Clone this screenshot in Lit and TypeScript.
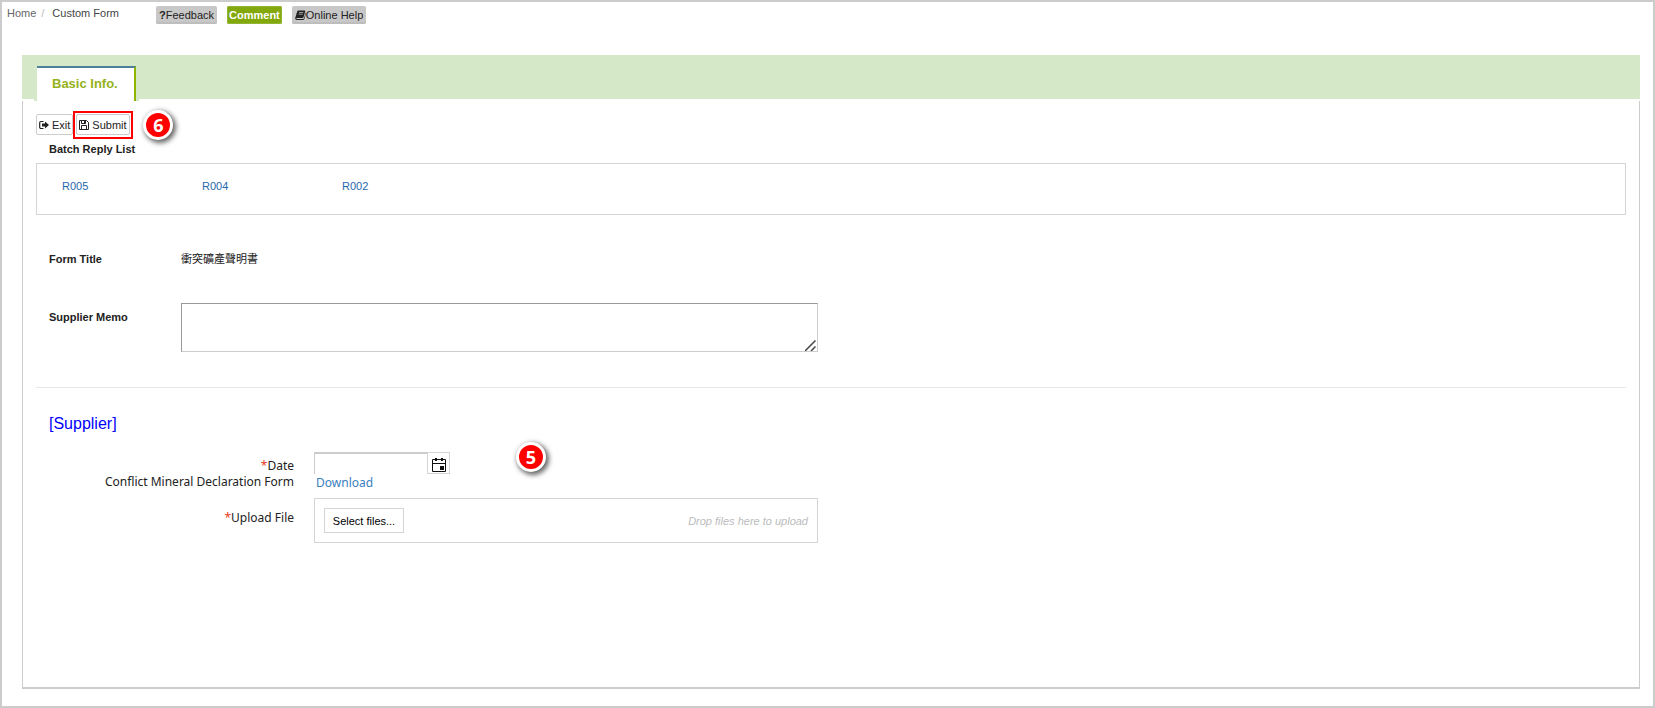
import { LitElement, html, css, svg } from "lit";
import { customElement, property, query } from "lit/decorators.js";

@customElement("step-marker")
class StepMarker extends LitElement {
  @property() step = "";

  static styles = css`
    :host {
      display: flex;
      align-items: center;
      justify-content: center;
      box-sizing: border-box;
      width: 30px;
      height: 30px;
      border: 3px solid #fff;
      border-radius: 50%;
      background: #f00;
      box-shadow: 2px 2px 5px 1px rgba(0, 0, 0, 0.6);
      color: #fff;
      font: bold 18px/24px "Open Sans", "Noto Sans", sans-serif;
    }
  `;

  render() {
    return html`${this.step}`;
  }
}

const exitIcon = svg`
  <path d="M4.5 1.500H2A1.200 1.200 0 0 0 .700 2.800V7.200A1.200 1.200 0 0 0 2 8.500H4.500" fill="none" stroke="currentColor" stroke-width="1.200"/>
  <path d="M3 3.600H6V1.500L10 5 6 8.500V6.400H3Z" fill="currentColor"/>`;

const saveIcon = svg`
  <path d="M.5.500H7.500L9.500 2.500V9.500H.500Z" fill="none" stroke="currentColor"/>
  <path d="M2.500.500V3.500H6.500V.500M2.500 9.500V5.500H7.500V9.500" fill="none" stroke="currentColor"/>
  <path d="M5 1H6V3H5Z" fill="currentColor"/>`;

const bookIcon = svg`
  <path d="M3.300.500H9.600Q10.500.700 10.200 1.600L8.500 7.200Q8.200 8 7.400 8H1.900Q1.200 8 1.300 8.500T2 9H8Q8.700 9 9 8.300L10.500 3.300 10.800 2.500Q11.200 3 10.900 3.700L9.400 9Q9 10 8 10H1.600Q.200 9.800.200 8.300.200 7.500.600 6.700L2.200 1.600Q2.500.600 3.300.500Z" fill="currentColor"/>
  <path d="M4 2.500H8.300M3.500 4.200H7.800" stroke="#ccc" stroke-width=".7"/>`;

const calendarIcon = svg`
  <path d="M.5 2.500H13.500V14.500H.500ZM.500 6.500H13.500" fill="none" stroke="currentColor"/>
  <path d="M3 1H5V4H3ZM9 1H11V4H9ZM8 9H12V13H8Z" fill="currentColor"/>`;

@customElement("app-root")
class AppRoot extends LitElement {
  @query(".file-input") fileInput!: HTMLInputElement;

  static styles = css`
    :host {
      display: flex;
      flex-direction: column;
      box-sizing: border-box;
      min-height: 100vh;
      padding: 3px 13px 17px 20px;
      border: 2px solid #ccc;
      background: #fff;
      color: #222;
      font: 11px/16px "Liberation Sans", "Noto Sans CJK TC", sans-serif;
    }
    a { color: #1f68ad; text-decoration: none; }
    button, input, textarea { box-sizing: border-box; margin: 0; font: inherit; color: inherit; }
    button { cursor: pointer; }

    .topbar { display: flex; align-items: flex-start; height: 50px; margin-left: -15px; }
    .crumbs { display: flex; width: 149px; color: #444; }
    .crumbs a { color: #666; }
    .slash { box-sizing: border-box; width: 16px; padding-left: 5px; color: #bbb; }
    .links { display: flex; gap: 10px; padding-top: 1px; }
    .tag {
      display: flex;
      align-items: center;
      height: 18px;
      padding: 0 3px;
      border: 0;
      border-radius: 2px;
      background: #c8c8c8;
      box-shadow: inset 0 -2px 1px #bdbdbd;
      color: #222;
    }
    .tag.green {
      padding: 0 2px;
      background: #82a80b;
      box-shadow: inset 0 0 1px 1px #94b53a;
      color: #fff;
      font-weight: bold;
    }

    .tabs { display: flex; box-sizing: border-box; height: 44px; padding: 11px 15px 0; background: #d5e8c8; }
    .tab {
      height: 35px;
      padding: 0 16px 2px 15px;
      border: 0;
      border-top: 2px solid #4c7f98;
      border-right: 2px solid #8fb400;
      background: #fff;
      box-shadow: -3px 0 #d5e8c8, 3px 0 #d5e8c8;
      color: #94b21c;
      font-size: 13px;
      font-weight: bold;
    }
    .panel {
      flex: 1;
      box-sizing: border-box;
      margin-top: 2px;
      padding: 13px 13px 40px;
      border: solid #ccc;
      border-width: 0 1px 2px;
    }

    .toolbar { display: flex; height: 21px; }
    .tool {
      display: flex;
      align-items: center;
      gap: 3px;
      height: 21px;
      padding: 0 2px;
      border: 1px solid #ccc;
      border-radius: 2px;
      background: #fff;
    }
    .highlight {
      position: relative;
      display: flex;
      height: 22px;
      margin: -3px 0;
      padding: 1px;
      border: 2px solid #f00;
      background: #fff;
    }
    .step-submit { position: absolute; left: 68px; top: -3px; }
    .step-date { position: absolute; left: 202px; top: -10px; }

    h2, h3 { margin: 0; font-size: 11px; line-height: 16px; }
    h2 { margin: 6px 13px; }
    .replies { display: flex; box-sizing: border-box; height: 52px; padding: 14px 25px; border: 1px solid #d5d5d5; }
    .replies a { width: 140px; }

    .row { display: flex; box-sizing: border-box; width: 782px; max-width: 100%; padding-left: 13px; }
    .row .name { width: 132px; font-weight: bold; }
    .title-row { margin-top: 36px; }
    .memo-row { margin-top: 36px; }
    .memo-row .name { padding-top: 6px; }
    .memo { position: relative; display: flex; flex: 1; }
    textarea {
      width: 100%;
      height: 49px;
      border: 1px solid #ccc;
      border-top-color: #999;
      border-left-color: #999;
      background: #fff;
      resize: none;
    }
    .grip { position: absolute; right: 2px; bottom: 1px; }
    hr { height: 1px; margin: 35px 0 0; border: 0; background: #e8e8e8; }

    .supplier h3 { margin: 26px 13px 18px; color: #00f; font-size: 16px; line-height: 20px; font-weight: normal; }
    .fields {
      display: grid;
      grid-template-columns: 258px 1fr;
      column-gap: 20px;
      width: 782px;
      max-width: 100%;
    }
    .label { color: #222; font: 12px/16px "Noto Sans", sans-serif; text-align: right; }
    .label.date { align-self: end; }
    .label.upload { padding-top: 12px; }
    .required { color: #e8401c; }
    .date-box { position: relative; display: flex; height: 22px; }
    .date-box input { width: 113px; border: solid #ccc; border-width: 2px 0 0 1px; background: #fff; }
    .calendar {
      display: flex;
      align-items: center;
      justify-content: center;
      width: 23px;
      padding: 2px 0 0;
      border: 1px solid #d5d5d5;
      background: #fff;
      color: #111;
    }
    .download { margin-bottom: 7px; padding: 1px 0 0 2px; color: #3a80c0; font: 12px/16px "Noto Sans", sans-serif; }
    .drop {
      display: flex;
      align-items: center;
      justify-content: space-between;
      box-sizing: border-box;
      height: 45px;
      padding: 0 9px;
      border: 1px solid #d5d5d5;
    }
    .select { width: 80px; height: 25px; padding: 0; border: 1px solid #d5d5d5; background: #fff; color: #000; }
    .hint { color: #bbb; font-style: italic; }
  `;

  private pickFiles() {
    this.fileInput.click();
  }

  render() {
    return html`
      <header class="topbar">
        <nav class="crumbs" aria-label="Breadcrumb">
          <a href="#home">Home</a><span class="slash">/</span><span>Custom Form</span>
        </nav>
        <div class="links">
          <button class="tag"><b>?</b>Feedback</button>
          <button class="tag green">Comment</button>
          <button class="tag"><svg width="11" height="10" viewBox="0 0 11 10">${bookIcon}</svg>Online Help</button>
        </div>
      </header>
      <div class="tabs" role="tablist">
        <button class="tab" role="tab" aria-selected="true">Basic Info.</button>
      </div>
      <main class="panel">
        <div class="toolbar">
          <button class="tool"><svg width="10" height="10" viewBox="0 0 10 10">${exitIcon}</svg>Exit</button>
          <div class="highlight">
            <button class="tool"><svg width="10" height="10" viewBox="0 0 10 10">${saveIcon}</svg>Submit</button>
            <step-marker class="step-submit" step="6"></step-marker>
          </div>
        </div>
        <h2>Batch Reply List</h2>
        <div class="replies">
          ${["R005", "R004", "R002"].map((id) => html`<a href="#${id}">${id}</a>`)}
        </div>
        <div class="row title-row">
          <span class="name">Form Title</span><span lang="zh-Hant">衝突礦產聲明書</span>
        </div>
        <div class="row memo-row">
          <label class="name" for="memo">Supplier Memo</label>
          <div class="memo">
            <textarea id="memo"></textarea>
            <svg class="grip" width="11" height="11" viewBox="0 0 11 11">
              <path d="M0 11L10.500.500M6 11L10.500 6.500" fill="none" stroke="#444" stroke-width="1.500"/>
            </svg>
          </div>
        </div>
        <hr />
        <section class="supplier">
          <h3>[Supplier]</h3>
          <div class="fields">
            <label class="label date" for="date"><span class="required">*</span>Date</label>
            <div class="date-box">
              <input id="date" type="text" />
              <button class="calendar" aria-label="Open calendar">
                <svg width="14" height="15" viewBox="0 0 14 15">${calendarIcon}</svg>
              </button>
              <step-marker class="step-date" step="5"></step-marker>
            </div>
            <span class="label">Conflict Mineral Declaration Form</span>
            <a class="download" href="#download">Download</a>
            <label class="label upload" for="files"><span class="required">*</span>Upload File</label>
            <div class="drop">
              <button class="select" id="files" @click=${this.pickFiles}>Select files...</button>
              <input class="file-input" type="file" multiple hidden />
              <span class="hint">Drop files here to upload</span>
            </div>
          </div>
        </section>
      </main>
    `;
  }
}
